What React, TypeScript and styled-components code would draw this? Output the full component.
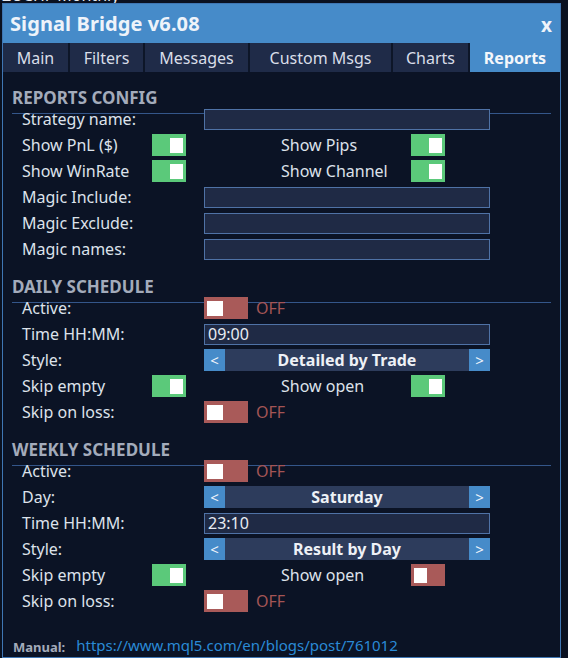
import styled, { createGlobalStyle } from 'styled-components'

const GlobalStyle = createGlobalStyle`
  html, body {
    margin: 0;
    padding: 0;
    background: #0a1120;
    font-family: "Noto Sans", "Open Sans", sans-serif;
  }
`

const Chart = styled.div`
  position: relative;
  width: 568px;
  height: 658px;
  overflow: hidden;
`

// chart caption behind the panel, only its bottom edge shows
const ChartCaption = styled.div`
  position: absolute;
  left: 2px;
  top: -14px;
  color: #e6e9ef;
  font-size: 16px;
  line-height: 18px;
`

const Window = styled.div`
  position: absolute;
  left: 2px;
  top: 3px;
  width: 557px;
  height: 653px;
  border: 1px solid #3f76b3;
  background: #0b1325;
  display: flex;
  flex-direction: column;
`

const TitleBar = styled.div`
  height: 39px;
  flex-shrink: 0;
  background: #468bc9;
  display: flex;
  align-items: center;
  justify-content: space-between;
  padding: 0 8px 0 7px;
  color: #eef3fa;
  font-weight: 700;
`

const Title = styled.span`
  font-size: 20px;
  letter-spacing: 0.1px;
`

const Close = styled.span`
  font-size: 19px;
  margin-top: 2px;
`

const Tabs = styled.div`
  height: 29px;
  flex-shrink: 0;
  display: flex;
  gap: 2px;
  background: #0d1628;
`

const Tab = styled.div<{ $w: number; $active?: boolean }>`
  width: ${p => p.$w}px;
  display: flex;
  align-items: center;
  justify-content: center;
  font-size: 16px;
  background: ${p => (p.$active ? '#468bc9' : '#1f2b48')};
  color: ${p => (p.$active ? '#f4f7fb' : '#d9dee8')};
  font-weight: ${p => (p.$active ? 700 : 400)};
`

const Body = styled.div`
  flex: 1;
  padding: 0 9px;
  display: flex;
  flex-direction: column;
`

const Header = styled.div<{ $top: number }>`
  height: ${p => p.$top}px;
  flex-shrink: 0;
  border-bottom: 1px solid #34568a;
  color: #a3abbb;
  font-size: 17px;
  font-weight: 700;
  display: flex;
  align-items: flex-end;
  padding-bottom: 5px;
  box-sizing: border-box;
  line-height: 20px;
`

const Rows = styled.div`
  margin-top: -8px;
  padding-left: 10px;
  display: flex;
  flex-direction: column;
  flex-shrink: 0;
`

const Row = styled.div`
  height: 26px;
  flex-shrink: 0;
  display: flex;
  align-items: center;
`

const Label = styled.div<{ $w: number }>`
  width: ${p => p.$w}px;
  flex-shrink: 0;
  color: #dde2eb;
  font-size: 16px;
  white-space: nowrap;
`

const Input = styled.div`
  width: 286px;
  height: 21px;
  box-sizing: border-box;
  background: #1f2a45;
  border: 1px solid #4f72a6;
  color: #e8ecf3;
  font-size: 16px;
  line-height: 19px;
  padding-left: 3px;
`

const Toggle = styled.div<{ $on: boolean; $w: number }>`
  width: ${p => p.$w}px;
  height: 22px;
  flex-shrink: 0;
  box-sizing: border-box;
  background: ${p => (p.$on ? '#5bc97a' : '#a95a59')};
  display: flex;
  align-items: center;
  justify-content: ${p => (p.$on ? 'flex-end' : 'flex-start')};
  padding: 0 3px;
`

const Knob = styled.div<{ $w: number }>`
  width: ${p => p.$w}px;
  height: 15px;
  background: #ffffff;
`

const Off = styled.span`
  margin-left: 8px;
  color: #a45555;
  font-size: 16px;
`

const Spacer = styled.div<{ $w: number }>`
  width: ${p => p.$w}px;
  flex-shrink: 0;
`

const Selector = styled.div`
  width: 286px;
  height: 22px;
  display: flex;
  background: #2d3c5c;
`

const Arrow = styled.div`
  width: 21px;
  background: #468bc9;
  color: #f1f5fb;
  font-size: 15px;
  display: flex;
  align-items: center;
  justify-content: center;
`

const Choice = styled.div`
  flex: 1;
  text-align: center;
  color: #eef1f6;
  font-size: 16px;
  font-weight: 700;
  line-height: 22px;
`

const Footer = styled.div`
  margin-top: auto;
  height: 30px;
  display: flex;
  align-items: center;
  gap: 11px;
  padding: 6px 0 0 1px;
  box-sizing: border-box;
`

const ManualLabel = styled.span`
  color: #a3abbb;
  font-size: 13px;
  font-weight: 700;
  margin-top: 3px;
`

const Link = styled.span`
  color: #2a8ad6;
  font-size: 15px;
`

const Switch = ({ on, w = 34 }: { on: boolean; w?: number }) => (
  <Toggle $on={on} $w={w}>
    <Knob $w={w > 34 ? 16 : 13} />
  </Toggle>
)

const OffSwitch = () => (
  <>
    <Switch on={false} w={44} />
    <Off>OFF</Off>
  </>
)

const Pick = ({ value }: { value: string }) => (
  <Selector>
    <Arrow>&lt;</Arrow>
    <Choice>{value}</Choice>
    <Arrow>&gt;</Arrow>
  </Selector>
)

const tabs = [
  { name: 'Main', w: 65 },
  { name: 'Filters', w: 73 },
  { name: 'Messages', w: 103 },
  { name: 'Custom Msgs', w: 141 },
  { name: 'Charts', w: 75 },
  { name: 'Reports', w: 90, active: true },
]

export default function App() {
  return (
    <Chart>
      <GlobalStyle />
      <ChartCaption>ZUCHF Monthly</ChartCaption>
      <Window>
        <TitleBar>
          <Title>Signal Bridge v6.08</Title>
          <Close>x</Close>
        </TitleBar>
        <Tabs>
          {tabs.map(t => (
            <Tab key={t.name} $w={t.w} $active={t.active}>
              {t.name}
            </Tab>
          ))}
        </Tabs>
        <Body>
          <Header $top={42}>REPORTS CONFIG</Header>
          <Rows>
            <Row>
              <Label $w={182}>Strategy name:</Label>
              <Input />
            </Row>
            <Row>
              <Label $w={130}>Show PnL ($)</Label>
              <Switch on />
              <Spacer $w={95} />
              <Label $w={130}>Show Pips</Label>
              <Switch on />
            </Row>
            <Row>
              <Label $w={130}>Show WinRate</Label>
              <Switch on />
              <Spacer $w={95} />
              <Label $w={130}>Show Channel</Label>
              <Switch on />
            </Row>
            <Row>
              <Label $w={182}>Magic Include:</Label>
              <Input />
            </Row>
            <Row>
              <Label $w={182}>Magic Exclude:</Label>
              <Input />
            </Row>
            <Row>
              <Label $w={182}>Magic names:</Label>
              <Input />
            </Row>
          </Rows>

          <Header $top={41}>DAILY SCHEDULE</Header>
          <Rows>
            <Row>
              <Label $w={182}>Active:</Label>
              <OffSwitch />
            </Row>
            <Row>
              <Label $w={182}>Time HH:MM:</Label>
              <Input>09:00</Input>
            </Row>
            <Row>
              <Label $w={182}>Style:</Label>
              <Pick value="Detailed by Trade" />
            </Row>
            <Row>
              <Label $w={130}>Skip empty</Label>
              <Switch on />
              <Spacer $w={95} />
              <Label $w={130}>Show open</Label>
              <Switch on />
            </Row>
            <Row>
              <Label $w={182}>Skip on loss:</Label>
              <OffSwitch />
            </Row>
          </Rows>

          <Header $top={41}>WEEKLY SCHEDULE</Header>
          <Rows>
            <Row>
              <Label $w={182}>Active:</Label>
              <OffSwitch />
            </Row>
            <Row>
              <Label $w={182}>Day:</Label>
              <Pick value="Saturday" />
            </Row>
            <Row>
              <Label $w={182}>Time HH:MM:</Label>
              <Input>23:10</Input>
            </Row>
            <Row>
              <Label $w={182}>Style:</Label>
              <Pick value="Result by Day" />
            </Row>
            <Row>
              <Label $w={130}>Skip empty</Label>
              <Switch on />
              <Spacer $w={95} />
              <Label $w={130}>Show open</Label>
              <Switch on={false} />
            </Row>
            <Row>
              <Label $w={182}>Skip on loss:</Label>
              <OffSwitch />
            </Row>
          </Rows>

          <Footer>
            <ManualLabel>Manual:</ManualLabel>
            <Link>https://www.mql5.com/en/blogs/post/761012</Link>
          </Footer>
        </Body>
      </Window>
    </Chart>
  )
}
